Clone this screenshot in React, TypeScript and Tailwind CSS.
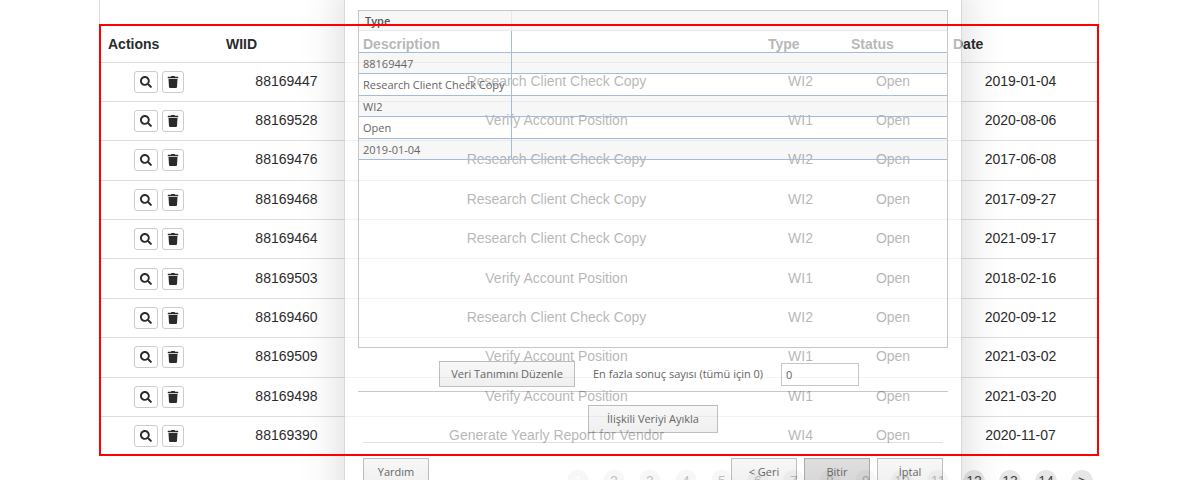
import React from "react";
import { FaSearch, FaTrash } from "react-icons/fa";

type Item = { id: string; description: string; type: string; status: string; date: string };

const check = "Research Client Check Copy";
const verify = "Verify Account Position";

const items: Item[] = [
  { id: "88169447", description: check, type: "WI2", status: "Open", date: "2019-01-04" },
  { id: "88169528", description: verify, type: "WI1", status: "Open", date: "2020-08-06" },
  { id: "88169476", description: check, type: "WI2", status: "Open", date: "2017-06-08" },
  { id: "88169468", description: check, type: "WI2", status: "Open", date: "2017-09-27" },
  { id: "88169464", description: check, type: "WI2", status: "Open", date: "2021-09-17" },
  { id: "88169503", description: verify, type: "WI1", status: "Open", date: "2018-02-16" },
  { id: "88169460", description: check, type: "WI2", status: "Open", date: "2020-09-12" },
  { id: "88169509", description: verify, type: "WI1", status: "Open", date: "2021-03-02" },
  { id: "88169498", description: verify, type: "WI1", status: "Open", date: "2021-03-20" },
  { id: "88169390", description: "Generate Yearly Report for Vendor", type: "WI4", status: "Open", date: "2020-11-07" },
];

const pages = ["1", "2", "3", "4", "5", "6", "7", "8", "9", "10", "11", "12", "13", "14", ">"];

function ItemTable() {
  return (
    <table className="h-[429px] w-full table-fixed border-collapse text-sm leading-5">
      <colgroup>
        <col className="w-[118px]" />
        <col className="w-[137px]" />
        <col className="w-[405px]" />
        <col className="w-[83px]" />
        <col className="w-[102px]" />
        <col className="w-[153px]" />
      </colgroup>
      <thead>
        <tr className="h-9 text-left">
          {["Actions", "WIID", "Description", "Type", "Status", "Date"].map((h) => (
            <th key={h} className="px-2 py-0 font-bold">{h}</th>
          ))}
        </tr>
      </thead>
      <tbody>
        {items.map((item) => (
          <tr key={item.id} className="border-t border-[#ddd] text-center">
            <td className="px-2">
              <div className="flex items-center justify-center gap-1">
                <button aria-label="View" className="flex h-[22px] w-6 items-center justify-center rounded-[3px] border border-[#ccc] bg-white">
                  <FaSearch size={12} />
                </button>
                <button aria-label="Delete" className="flex h-[22px] w-[22px] items-center justify-center rounded-[3px] border border-[#ccc] bg-white">
                  <FaTrash size={12} />
                </button>
              </div>
            </td>
            <td className="pb-0.5">{item.id}</td>
            <td className="pr-0.5 pb-0.5">{item.description}</td>
            <td className="pr-0.5 pb-0.5">{item.type}</td>
            <td className="pr-0.5 pb-0.5">{item.status}</td>
            <td className="pr-0.5 pb-0.5">{item.date}</td>
          </tr>
        ))}
      </tbody>
    </table>
  );
}

function DialogButton({ children, className = "" }: { children: React.ReactNode; className?: string }) {
  return (
    <button className={`border border-black/22 bg-linear-to-b from-black/3 to-black/6 text-center ${className}`}>
      {children}
    </button>
  );
}

function ExtractDialog() {
  const values = ["", "88169447", check, "WI2", "Open", "2019-01-04"];
  return (
    <div
      role="dialog"
      aria-label="Type"
      className="absolute -top-10 left-[245px] z-10 h-[640px] w-[618px] border-x border-black/15 bg-white/66 px-[13px] pt-[50px] font-['Open_Sans','Noto_Sans',sans-serif] text-[11px] leading-4 text-[#666] shadow-[0_24px_42px_rgba(0,0,0,0.16)]"
    >
      <div className="h-[338px] border border-black/22">
        <table className="w-full table-fixed border-separate border-spacing-0">
          <colgroup>
            <col className="w-[153px]" />
            <col />
          </colgroup>
          <thead>
            <tr className="h-5 bg-black/3 text-left">
              <th className="border-r border-b border-black/6 px-1.5 py-0 font-semibold text-[#555]">Type</th>
              <th className="border-b border-black/6 p-0" />
            </tr>
          </thead>
        </table>
        <table className="h-[129px] w-full table-fixed border-separate border-spacing-0">
          <colgroup>
            <col className="w-[153px]" />
            <col />
          </colgroup>
          <tbody>
            {values.map((value, i) => (
              <tr key={i} className="h-[21px] odd:bg-transparent even:bg-black/3">
                <td className="border-r border-b border-[#a3bdd8] px-1 pt-0.5 pb-0 whitespace-nowrap">{value}</td>
                <td className="border-b border-[#a3bdd8] p-0" />
              </tr>
            ))}
          </tbody>
        </table>
      </div>
      <div className="mt-3 flex h-7 items-center pl-[81px]">
        <DialogButton className="h-[26px] w-[136px]">Veri Tanımını Düzenle</DialogButton>
        <label htmlFor="max-results" className="ml-[18px] w-[188px] whitespace-nowrap">
          En fazla sonuç sayısı (tümü için 0)
        </label>
        <input id="max-results" defaultValue="0" className="h-[23px] w-[78px] border border-black/22 bg-transparent px-1 outline-none" />
      </div>
      <div className="mt-[3px] border-t border-black/22" />
      <div className="mt-[13px] flex justify-center">
        <DialogButton className="h-7 w-[130px]">İlişkili Veriyi Ayıkla</DialogButton>
      </div>
      <div className="mx-[5px] mt-[9px] border-t border-black/12" />
      <div className="mx-[5px] mt-[15px] flex gap-[7px]">
        <DialogButton className="mr-auto h-7 w-[66px]">Yardım</DialogButton>
        <DialogButton className="h-7 w-[66px]">&lt; Geri</DialogButton>
        <DialogButton className="h-7 w-[66px] bg-black/10">Bitir</DialogButton>
        <DialogButton className="h-7 w-[66px]">İptal</DialogButton>
      </div>
    </div>
  );
}

export default function App() {
  return (
    <div className="h-screen overflow-hidden bg-white font-['Liberation_Sans',Arial,sans-serif] text-[#2b2b2b]">
      <main className="relative mx-auto max-w-[1000px]">
        <div className="h-6 border-x border-[#ddd]" />
        <section className="relative px-px pt-0.5 pb-px">
          <ItemTable />
          <div className="pointer-events-none absolute inset-0 z-20 border-2 border-[#f00]" />
        </section>
        <nav className="mt-3.5 flex justify-end gap-3.5 pr-1.5 text-sm leading-5">
          {pages.map((p) => (
            <a
              key={p}
              href="#"
              aria-current={p === "1" ? "page" : undefined}
              className={`flex h-[22px] w-[22px] items-center justify-center rounded-full bg-[#e6e6e6] ${p === "1" ? "text-white" : "text-[#444]"}`}
            >
              {p}
            </a>
          ))}
        </nav>
        <ExtractDialog />
      </main>
    </div>
  );
}
